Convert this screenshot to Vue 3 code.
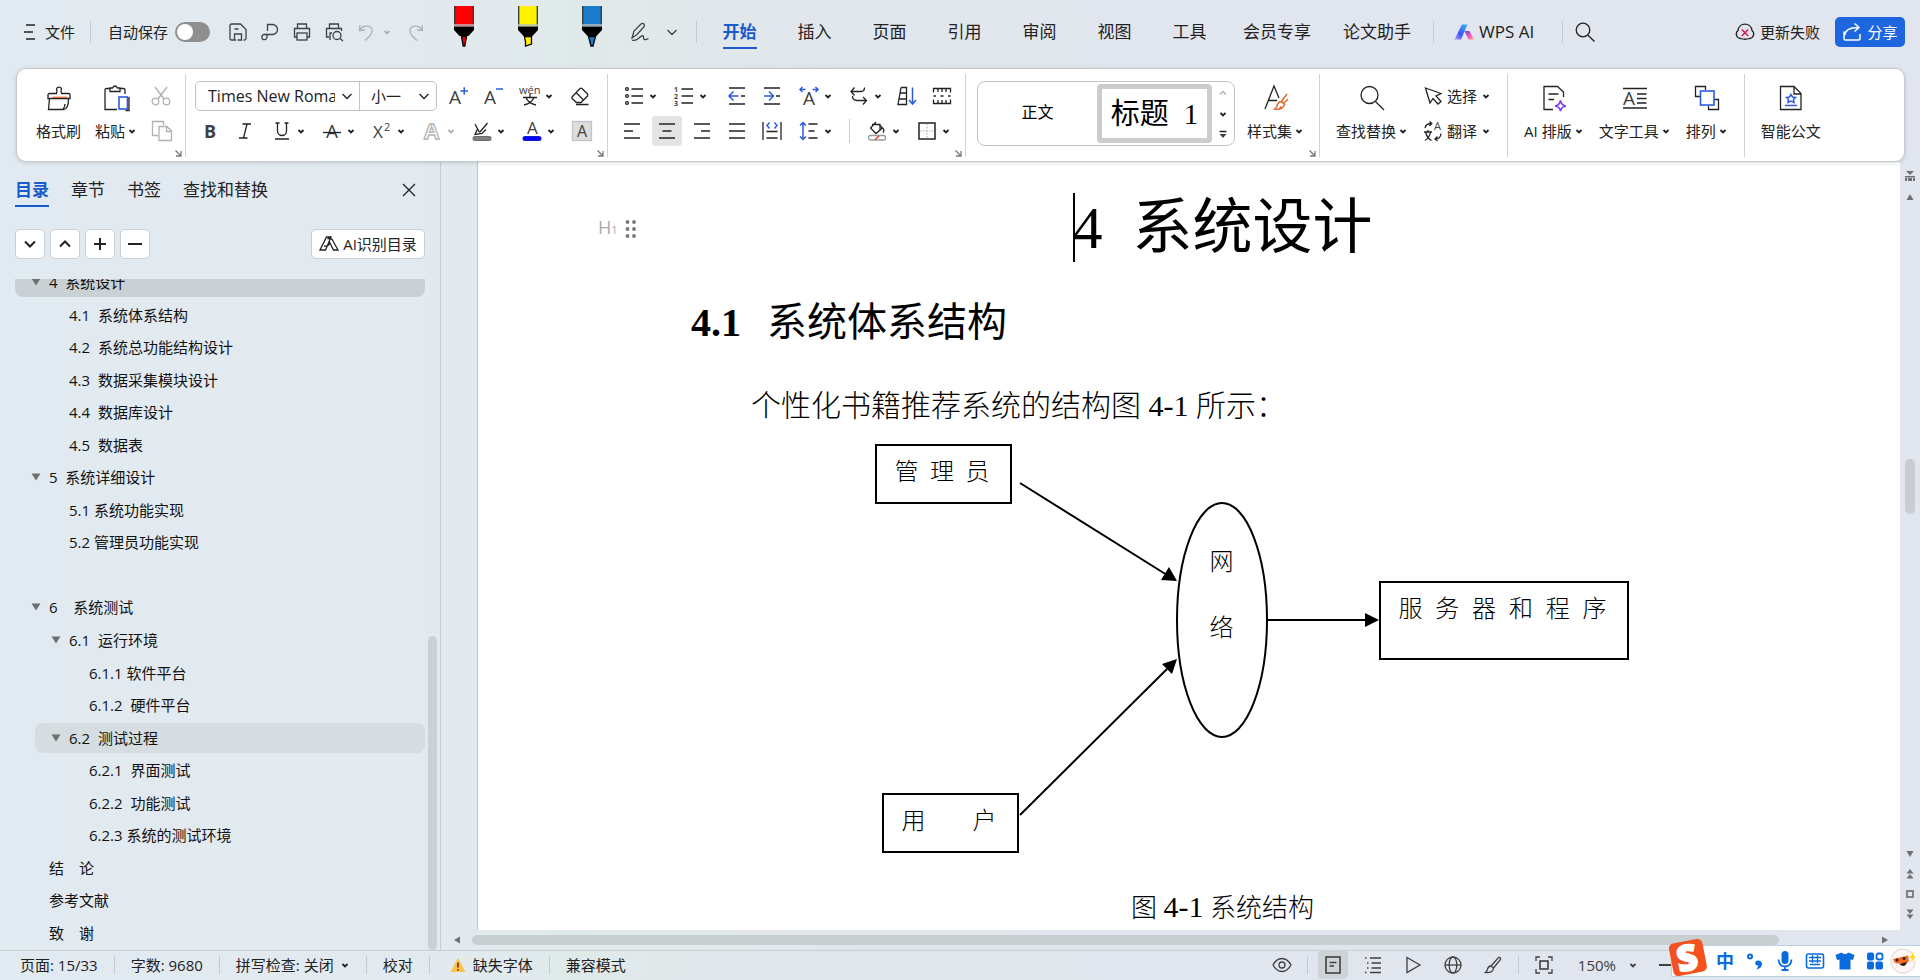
<template>
  <div class="wps">
    <header class="topbar">
      <button class="file_btn"><Icon n="menu" :s="12" :h="16" /> 文件</button>
      <i class="sep"></i>
      <label class="autosave">自动保存<input type="checkbox" class="toggle"></label>
      <button v-for="q in quick" :key="q" class="quick_btn" :class="{ faded: q == 'undo' }" :aria-label="q"><Icon :n="q" /></button>
      <button class="mini faded" aria-label="undo list"><Icon n="chev" :s="10" /></button>
      <button class="quick_btn faded redo" aria-label="redo"><Icon n="redo" /></button>
      <button v-for="p in pens" :key="p" class="pen_btn" :aria-label="p"><Icon :n="p" :s="20" :h="42" /></button>
      <button class="quick_btn" aria-label="ink"><Icon n="scribble" /></button>
      <button class="quick_btn" aria-label="ink list"><Icon n="chevBig" :s="12" /></button>
      <i class="sep tabs_sep"></i>
      <nav class="tabs">
        <button v-for="(t, i) in tabs" :key="t" :class="{ active: i == 0 }"><span>{{ t }}</span></button>
      </nav>
      <i class="sep ai_sep"></i>
      <button class="ai_btn"><Icon n="wpsai" />WPS AI</button>
      <i class="sep search_sep"></i>
      <button class="search_btn" aria-label="search"><Icon n="search" :s="22" /></button>
      <button class="update_btn"><Icon n="updateFail" />更新失败</button>
      <button class="share_btn"><Icon n="share" />分享</button>
    </header>

    <section class="ribbon">
      <div class="group clip">
        <BigBtn n="brush" label="格式刷" />
        <BigBtn n="paste" label="粘贴" more />
        <div class="rows faded">
          <button class="row" aria-label="cut"><Icon n="cut" /></button>
          <button class="row" aria-label="copy"><Icon n="copy" :s="22" /></button>
        </div>
        <button class="launcher" aria-label="clipboard options"><Icon n="launcher" :s="7" /></button>
      </div>

      <div class="group font">
        <div class="rows">
          <div class="row">
            <div class="combo">
              <div class="pick family">
                <select aria-label="font"><option>Times New Roman</option></select>
                <Icon n="chevBig" :s="12" />
              </div>
              <div class="pick size">
                <select aria-label="size"><option>小一</option></select>
                <Icon n="chevBig" :s="12" />
              </div>
            </div>
            <ToolBtn v-for="t in fontTop" :key="t.n" v-bind="t" />
          </div>
          <div class="row">
            <ToolBtn v-for="t in fontBottom" :key="t.n" v-bind="t" />
          </div>
        </div>
        <button class="launcher" aria-label="font options"><Icon n="launcher" :s="7" /></button>
      </div>

      <div class="group para">
        <div class="rows">
          <div class="row">
            <ToolBtn v-for="t in paraTop" :key="t.n" v-bind="t" />
          </div>
          <div class="row">
            <ToolBtn v-for="t in paraBottom" :key="t.n" v-bind="t" />
          </div>
        </div>
        <button class="launcher" aria-label="paragraph options"><Icon n="launcher" :s="7" /></button>
      </div>

      <div class="group styles">
        <div class="gallery">
          <button class="style_body">正文</button>
          <button class="style_title">标题<span>1</span></button>
          <div class="gallery_nav">
            <button class="faded" aria-label="up"><Icon n="up" :s="10" /></button>
            <button aria-label="down"><Icon n="chev" :s="10" /></button>
            <button aria-label="more"><Icon n="moreDown" :s="10" /></button>
          </div>
        </div>
        <BigBtn n="styleSet" label="样式集" more />
        <button class="launcher" aria-label="style options"><Icon n="launcher" :s="7" /></button>
      </div>

      <div class="group">
        <BigBtn n="find" label="查找替换" more />
        <div class="rows side">
          <button class="row"><Icon n="cursor" />选择<Icon n="chev" :s="10" /></button>
          <button class="row"><Icon n="translate" />翻译<Icon n="chev" :s="10" /></button>
        </div>
      </div>

      <div class="group">
        <BigBtn n="aiLayout" label="AI 排版" more />
        <BigBtn n="textTool" label="文字工具" more />
        <BigBtn n="arrange" label="排列" more />
      </div>

      <div class="group last">
        <BigBtn n="official" label="智能公文" />
      </div>
    </section>

    <main class="body">
      <aside class="outline">
        <div class="outline_tabs">
          <button v-for="(t, i) in sideTabs" :key="t" :class="{ active: i == 0 }">{{ t }}</button>
          <button class="close" aria-label="close"><Icon n="close" :s="14" /></button>
        </div>
        <div class="outline_tools">
          <button v-for="o in ['tDown', 'tUp', 'tPlus', 'tMinus']" :key="o" class="sq" :aria-label="o"><Icon :n="o" :s="16" /></button>
          <button class="ai_toc"><Icon n="aiToc" />AI识别目录</button>
        </div>
        <div class="tree_view">
          <ul class="tree">
            <li v-for="(r, i) in tree" :key="i" :class="['lv' + r.lv, r.state]">
              <span class="arrow"><Icon v-if="r.open" n="tri" :s="10" /></span>{{ r.text }}
            </li>
          </ul>
          <div class="tree_thumb"></div>
        </div>
      </aside>

      <section class="workspace">
        <div class="page_row">
          <article class="page">
            <div class="para_mark"><span>H<small>1</small></span><Icon n="dots" :s="12" :h="20" /></div>
            <h1><span class="caret"></span>4<span class="title_text">系统设计</span></h1>
            <h2><b>4.1</b>系统体系结构</h2>
            <p>个性化书籍推荐系统的结构图 4-1 所示：</p>
            <figure>
              <div class="canvas">
                <svg class="links" width="812" height="410" viewBox="0 0 812 410">
                  <g fill="none" stroke="#000" stroke-width="2">
                    <ellipse cx="405" cy="176" rx="45" ry="117" />
                    <path d="M203 39L350 131M203 371L350 225M450 176H550" />
                  </g>
                  <path d="M360 137L344 136L352 123ZM360 215L355 230L345 220ZM562 176L548 169V183Z" />
                </svg>
                <div class="node admin">管 理 员</div>
                <div class="node user">用 户</div>
                <div class="node server">服 务 器 和 程 序</div>
                <div class="net"><span>网</span><span>络</span></div>
              </div>
              <figcaption>图 <span>4-1</span> 系统结构</figcaption>
            </figure>
          </article>
          <div class="vbar">
            <Icon n="split" :s="12" />
            <Icon n="sUp" :s="10" />
            <div class="v_track"><div class="v_thumb"></div></div>
            <Icon n="sDown" :s="10" />
            <Icon n="sUp2" :s="10" />
            <Icon n="sBox" :s="10" />
            <Icon n="sDown2" :s="10" />
          </div>
        </div>
        <div class="hbar">
          <Icon n="sLeft" :s="10" />
          <div class="h_track"><div class="h_thumb"></div></div>
          <Icon n="sRight" :s="10" />
        </div>
      </section>
    </main>

    <footer class="status">
      <span>页面: 15/33</span><i></i>
      <span>字数: 9680</span><i></i>
      <button>拼写检查: 关闭<Icon n="chev" :s="10" class="after" /></button><i></i>
      <button>校对</button><i></i>
      <button class="warn"><Icon n="warn" :s="16" />缺失字体</button><i></i>
      <span>兼容模式</span>
      <div class="status_right">
        <button aria-label="eye"><Icon n="eye" /></button><i></i>
        <button v-for="v in views" :key="v" :class="{ on: v == 'vPage' }" :aria-label="v"><Icon :n="v" /></button><i></i>
        <button aria-label="fit"><Icon n="fit" /></button>
        <button class="zoom">150%<Icon n="chev" :s="10" /></button>
        <button class="zoom_out" aria-label="zoom out"><Icon n="minus" :s="14" /></button>
      </div>
    </footer>

    <div class="ime">
      <Icon n="sogou" :s="42" :h="40" class="ime_logo" />
      <button>中</button>
      <button v-for="m in ['punct', 'mic', 'kbd', 'shirt', 'apps']" :key="m" :aria-label="m"><Icon :n="m" /></button>
      <Icon n="mascot" :s="26" />
    </div>
  </div>
</template>

<script setup>
import { h } from 'vue'

const B = '#2b5ce0'

const icons = {
  menu: '<path d="M2 1H11M0 8H9M2 15H11" stroke-width="1.500"/>',
  chev: '<path d="M2.500 4L5 6.500L7.500 4" stroke-width="1.800"/>',
  chevBig: '<path d="M1.500 4L6 8.500L10.500 4"/>',
  up: '<path d="M2 6.500L5 3.500L8 6.500"/>',
  moreDown: '<path d="M1.500 1.500H8.500" stroke-width="1.500"/><path d="M1.500 4H8.500L5 8Z" fill="#404040" stroke="none"/>',
  launcher: '<path d="M.5.500L5.500 5.500M6 1V6H1" stroke="#777"/>',
  save: '<path d="M8 18H3.500Q2 18 2 16.500V3.500Q2 2 3.500 2H12.500L18 7.500V16.500Q18 18 16.500 18H15.500"/><path d="M6.500 18V12H13.500V18H9.500M6.500 7H10.500"/>',
  wpspdf: '<path d="M7.500 9V2.500H12.500A5 5 0 0 1 12.500 12.500H7V15A2.600 2.600 0 1 1 4.500 12.500H7"/>',
  print: '<path d="M5.500 6V2H14.500V6M5 15H2.500V6.500H17.500V15H15"/><rect x="5" y="11" width="10" height="7"/>',
  preview: '<path d="M5.500 6V2H14.500V6M5 15H2.500V6.500H17.500V9M6 18V11H8"/><circle cx="13" cy="13.500" r="4"/><path d="M16 16.500L19 19"/>',
  undo: '<path d="M4 3L3.500 8.500L9 8M3.700 8.300C8 1.500 16 4 16 9C16 13 11 16.500 9 18.500"/>',
  redo: '<path d="M16 3L16.500 8.500L11 8M16.300 8.300C12 1.500 4 4 4 9C4 13 9 16.500 11 18.500"/>',
  penRed: pen('#f00', 'M7.500 31.500H12.500L10.800 41H9.200Z'),
  penYellow: pen('#fff200', 'M6.500 31.500H13.500V39L7.500 41V37Z'),
  penBlue: pen('#1c7ccc', 'M6.500 31.500H13.500L11 41H9Z'),
  scribble: '<path d="M2 16L4 9L11.500 1.500Q13 1 14 2.200Q15 3.500 14 4.700L7 12.500L2 16ZM2 18Q5 19.500 9 16Q12.500 12.500 13.500 14.500C13 18 15 18.500 18.500 16.500"/>',
  wpsai: '<defs><linearGradient id="wa" x1="0" y1="1" x2="1" y2="0"><stop offset="0" stop-color="#b8a0ff"/><stop offset=".4" stop-color="#3a56f5"/><stop offset="1" stop-color="#35b8ff"/></linearGradient><linearGradient id="wb" x1="0" y1="0" x2="1" y2="1"><stop offset="0" stop-color="#5b3cf5"/><stop offset=".6" stop-color="#ff5bb0"/><stop offset="1" stop-color="#ffb09a"/></linearGradient></defs><path d="M8 2.500H13.500L7 17.500H.500Z" fill="url(#wa)" stroke="none"/><path d="M10.500 9H15.500L20 17.500H14.500Z" fill="url(#wb)" stroke="none"/>',
  search: '<circle cx="9" cy="9" r="6.800"/><path d="M14 14.200L20.500 20.500"/>',
  updateFail: '<path d="M5.500 16.500A4.500 4.500 0 0 1 3 8.500C4 0 16 0 17 8.500A4.500 4.500 0 0 1 14.500 16.500Q10 18 5.500 16.500Z"/><path d="M6.800 7.500L13.200 14M13.200 7.500L6.800 14" stroke="#d02050" stroke-width="1.600"/>',
  share: '<path d="M2 9.500V16.500Q2 18 3.500 18H16.500Q18 18 18 16.500V12M2.500 13.500C3 8 7 5.500 16.500 5.500M12.500 1.500L17 5.500L12.500 9.500" stroke-width="1.500"/>',
  brush: '<path d="M10.500 8.500Q11.500 6 10.500 4A2.600 2.600 0 0 1 15.500 4Q14.500 6 15.500 8.500H22.500Q24 8.500 24 10V13.500H2V10Q2 8.500 3.500 8.500ZM3.500 13.500L2.500 24.500H17.500Q22.500 24.500 22.500 13.500"/><path d="M6.500 12.300H21" stroke="#e06a30"/><path d="M17 24Q19 22 19 19"/>',
  paste: '<path d="M7 3.500H3.500Q2 3.500 2 5V24.500H14M17 3.500H20.500Q22 3.500 22 5V9M7 6.500V3H9.500Q12 -1 14.500 3H17V6.500Z"/><rect x="16" y="12" width="8.500" height="12" stroke="#2b5ce0" stroke-width="1.600"/><path d="M22.500 25.500H26V12"/>',
  cut: '<path d="M4 1L13 13M16 1L7 13"/><circle cx="4.500" cy="15.500" r="3.300"/><circle cx="15.500" cy="15.500" r="3.300"/>',
  copy: '<path d="M7 15.500H1.500V1.500H12.500V5M8 6.500H16L20.500 11V20.500H8ZM15.500 7V11.500H20"/>',
  aUp: txt(1, 18, 19, 'A') + `<path d="M12.500 5H20M16.200 1.200V8.800" stroke="${B}" stroke-width="1.500"/>`,
  aDown: txt(1, 18, 19, 'A') + `<path d="M13 3H20" stroke="${B}" stroke-width="1.500"/>`,
  wen: txt(-1, 8, 11, 'wén') + '<path d="M10 8V11M3 11.500H17M6 11.500Q8 17 16 19M14 11.500Q12 17 4 19"/>',
  eraser: '<path d="M2 11L10 2.500Q11 1.800 12 2.500L17.500 8Q18 9 17.500 10L11 16.500H6.500L2 12.500ZM6.500 7L13 13.500M6 18.500H18.500"/>',
  bold: txt(4, 17, 18, 'B', 'font-weight="700"'),
  italic: '<path d="M7.500 3H16M4 17H12.500M12 3L8.500 17"/>',
  underline: '<path d="M5.500 2V10A4.500 4.500 0 0 0 14.500 10V2M3.500 2H7.500M12.500 2H16.500M3 18H17"/>',
  strike: txt(4, 17, 19, 'A') + '<path d="M1 11.500H19"/>',
  sup: txt(1, 17, 17, 'X') + txt(12, 10, 11, '2'),
  outlineA: '<text x="2" y="18" font-size="22" font-weight="700" fill="#fff" stroke="#b4b4b4">A</text>',
  hilite: '<path d="M8 11L15.500 2M3 3L7.500 11.500M14 8.500L10 12.500L3 13.500L5.500 8"/><rect x="1" y="15.500" width="18" height="4" rx="1.500" fill="#808080" stroke="#555" stroke-width=".8"/>',
  fontColor: txt(5, 13, 17, 'A') + '<rect x="1" y="15.500" width="18" height="4" rx="1.500" fill="#00f" stroke="#00c" stroke-width=".8"/>',
  shadeA: '<rect x=".5" y=".5" width="19" height="19" fill="#dcdcdc" stroke="#c4c4c4"/>' + txt(5, 16, 16, 'A'),
  bullets: '<circle cx="3" cy="3" r="1.400"/><circle cx="3" cy="10" r="1.400"/><circle cx="3" cy="17" r="1.400"/><path d="M7.500 3H19M7.500 10H19M7.500 17H19"/>',
  numbers: txt(0, 6, 7, '1', 'font-weight="700"') + txt(0, 13, 7, '2', 'font-weight="700"') + txt(0, 20, 7, '3', 'font-weight="700"') + '<path d="M7.500 3H19M7.500 10H19M7.500 17H19"/>',
  outdent: `<path d="M2 2H18M2 18H18M14 10H18"/><path d="M11.500 10H2.500M6.500 5.500L2 10L6.500 14.500" stroke="${B}" stroke-width="1.500"/>`,
  indent: `<path d="M2 2H18M2 18H18M14 10H18"/><path d="M2 10H11M7 5.500L11.500 10L7 14.500" stroke="${B}" stroke-width="1.500"/>`,
  charW: `<path d="M1 3.500H6.500M3.500 1L1 3.500L3.500 6M19 3.500H13.500M16.500 1L19 3.500L16.500 6" stroke="${B}" stroke-width="1.500"/>` + txt(4, 19, 19, 'A'),
  swap: '<path d="M5.500 1.500L2 5.500L5.500 9.500M2.500 5.500H12Q15.500 5.500 15.500 1.500M14 11L17.500 14.500L14 18.500M17 14.500H8Q3.500 14.500 3.500 10"/>',
  sort: `<path d="M4 1.500H9.500V18.500H1L4 1.500M3 7H9M2 13H9"/><path d="M15.500 1.500V17.500M12 14L15.500 18L19 14" stroke="${B}" stroke-width="1.500"/>`,
  cells: '<path d="M1.500 6.500V2.500H18.500V6.500M1.500 13.500V17.500H18.500V13.500M6 3V6M10 3V6M14 3V6M6 17V14M10 17V14M14 17V14"/><path d="M1.500 10H4M8.500 10H11.500M16 10H18.500"/>',
  alignL: '<path d="M2 3H18M2 10H11M2 17H18"/>',
  alignC: '<path d="M2 3H18M5.500 10H14.500M2 17H18"/>',
  alignR: '<path d="M2 3H18M9 10H18M2 17H18"/>',
  justify: '<path d="M2 3H18M2 10H18M2 17H18"/>',
  distribute: `<path d="M1 1V19M19 1V19M4.500 10.500H15.500M4.500 17H15.500"/><path d="M7.500 1.500L5 4.500L7.500 7.500M12.500 1.500L15 4.500L12.500 7.500" stroke="${B}" stroke-width="1.500"/>`,
  spacing: `<path d="M4 1.500V18.500M1 4.500L4 1.500L7 4.500M1 15.500L4 18.500L7 15.500" stroke="${B}" stroke-width="1.500"/><path d="M9.500 3H18.500M9.500 10H15.500M9.500 17H18.500"/>`,
  fill: '<path d="M5 3.500H13V9M9 1L3.500 7L9 12.500L15.500 7L12 3.500M15.500 7Q18 9 16 11.500"/><rect x="1.500" y="14.500" width="17" height="4.500" rx="2" stroke="#999"/><path d="M8 18.500L12 15" stroke="#e03030"/>',
  border: '<rect x="2" y="2" width="16" height="16" stroke-width="1.500"/><path d="M10 3V17M3 10H17" stroke-dasharray="1.500 1.500" stroke="#aaa" stroke-width="1"/>',
  styleSet: '<path d="M2 24L11 1L16 13M5.500 15.500H14"/><path d="M24 9L18 17M25 14L20 19M18.500 16.500L21.500 19.500Q19 25.500 11.500 24Q14.500 22 14.500 19.500Q16 16.500 18.500 16.500ZM16.500 24L18 21.500" stroke="#e0662c" stroke-width="1.500"/>',
  find: '<circle cx="10.500" cy="10" r="8.500"/><path d="M16.500 16.500L25 25"/>',
  cursor: '<path d="M2.500 2L18 7.500L13 10L18 15.500L15 18L10 12.500L7 17Z"/>',
  translate: '<path d="M2 7Q3 2.500 8.500 2.500M6.500.500L8.800 2.500L6.500 5M18 12.500Q17.500 18 12.500 18M14.500 15.500L12 18L14.500 20M1 11H9M5 9V11M2 19.500Q6.500 17 7.500 11M8.500 19.500Q4 17 2.500 11"/>' + txt(11, 9, 11, 'A'),
  aiLayout: '<path d="M12 24.500H3V1.500H16.500L22.500 7V12M7.500 9H17.500M7.500 14.500H13"/><path d="M19.500 15.500Q20.500 20.500 25 21Q20.500 21.500 19.500 26Q18.500 21.500 14 21Q18.500 20.500 19.500 15.500Z" stroke="#7a3df0" stroke-width="1.600"/>',
  textTool: '<path d="M1 3.500H25M1 23H25M15 9H24.500M15 13.500H24.500M15 18H24.500"/>' + txt(1, 20, 19, 'A'),
  arrange: `<path d="M6 11.500H1.500V1.500H11.500V5M20 14.500H24.500V24.500H14.500V21"/><rect x="6.500" y="6" width="13.500" height="14" stroke="${B}" stroke-width="1.600"/>`,
  official: `<path d="M2.500 1.500H16L23 8.500V24.500H2.500ZM16 2V9H22.500"/><path d="M13 9.500L14.500 12L17.500 12.500L15.500 14.500L16 17.500L13 16L10 17.500L10.500 14.500L8.500 12.500L11.500 12ZM7 20.500H19" stroke="${B}" stroke-width="1.500"/>`,
  close: '<path d="M1 1L13 13M13 1L1 13"/>',
  tDown: '<path d="M3 5.500L8 10.500L13 5.500" stroke-width="2"/>',
  tUp: '<path d="M3 10.500L8 5.500L13 10.500" stroke-width="2"/>',
  tPlus: '<path d="M2 8H14M8 2V14" stroke-width="2"/>',
  tMinus: '<path d="M1 8H15" stroke-width="2"/>',
  aiToc: '<path d="M1 16L7.500 3H12L6.500 16ZM10 7L14.500 16H19L13.500 6Q11 3 8.500 5M5 12Q9 13 11 9"/>',
  tri: '<path d="M.5 1.500H9.500L5 8.500Z" fill="#707070" stroke="none"/>',
  dots: '<g fill="#777" stroke="none"><circle cx="2.500" cy="3" r="1.900"/><circle cx="9" cy="3" r="1.900"/><circle cx="2.500" cy="10" r="1.900"/><circle cx="9" cy="10" r="1.900"/><circle cx="2.500" cy="17" r="1.900"/><circle cx="9" cy="17" r="1.900"/></g>',
  split: solid('M2 1H10L6 5ZM1 6H11V7.500H1ZM1 8H3V11H1ZM4 8H8V11H4ZM9 8H11V11H9Z'),
  sUp: solid('M5 2L8.500 8H1.500Z'),
  sDown: solid('M5 8L8.500 2H1.500Z'),
  sUp2: solid('M5 0L8.500 4.500H1.500ZM5 5L8.500 9.500H1.500Z'),
  sDown2: solid('M5 5L8.500 .5H1.500ZM5 10L8.500 5.500H1.500Z'),
  sBox: '<rect x="2" y="2" width="6" height="6" stroke="#777" stroke-width="1.800"/>',
  sLeft: solid('M2 5L8 1.500V8.500Z'),
  sRight: solid('M8 5L2 1.500V8.500Z'),
  warn: '<path d="M8 1L15.500 15H.500Z" fill="#fbc04e" stroke="none"/><path d="M8 5.500V10.500M8 12V13.500" stroke="#7a4a00" stroke-width="1.800"/>',
  eye: '<path d="M1 10Q4.500 3.500 10 3.500T19 10Q15.500 16.500 10 16.500T1 10Z"/><circle cx="10" cy="10" r="3"/>',
  vPage: '<rect x="3" y="2" width="14" height="16" stroke-width="1.600"/><path d="M6.500 7.500H13.500M6.500 11H11"/>',
  vOutline: '<path d="M2 3H3.500M7 3H18M4 8H5.500M8.500 8H18M4 13H5.500M8.500 13H18M2 17.500H3.500M7 17.500H18"/>',
  vPlay: '<path d="M4 2.500L17 10L4 17.500Z"/>',
  vWeb: '<circle cx="10" cy="10" r="8"/><ellipse cx="10" cy="10" rx="3.800" ry="8"/><path d="M2 10H18"/>',
  vPen: '<path d="M8 11L15.500 2.500Q18 2 17.500 4.500L10.500 13M8 11L10.500 13Q10.500 18 2.500 17.500Q4.500 16 4.500 14Q5.500 11 8 11Z"/>',
  fit: '<path d="M6 2H2V6M14 2H18V6M6 18H2V14M14 18H18V14"/><rect x="6" y="6" width="8" height="8" stroke-width="1.600"/>',
  minus: '<path d="M0 7H14" stroke-width="2"/>',
  sogou: '<g transform="rotate(-11 21 20)"><rect x="4" y="3" width="34" height="33" rx="5" fill="#f4511e" stroke="none"/><text x="10" y="32" font-size="35" font-weight="800" fill="#fff" stroke="#fff" stroke-width="2">S</text></g>',
  punct: '<circle cx="5" cy="5.500" r="2" stroke="#0a6cdc" stroke-width="2"/><path d="M13.500 9.500A2.600 2.600 0 1 0 13.500 14.500L11.500 18.500Q17.500 17 17 12Q16 9.500 13.500 9.500Z" fill="#0a6cdc" stroke="none"/>',
  mic: '<rect x="6.500" y="0" width="7" height="13" rx="3.500" fill="#0a6cdc" stroke="none"/><path d="M3.500 8.500Q4 15.500 10 15.500T16.500 8.500M10 15.500V19M6.500 19H13.500" stroke="#0a6cdc" stroke-width="1.800"/>',
  kbd: '<rect x="1.500" y="3" width="17" height="14" rx="2" stroke="#0a6cdc" stroke-width="1.600"/><path d="M4 6.500H16M4 10H16M5 13.500H15M7.500 4V12M12.500 4V12" stroke="#0a6cdc"/>',
  shirt: '<path d="M6.500 1.500Q10 4.500 13.500 1.500L19.500 4L18 9L15.500 8.500V18.500H4.500V8.500L2 9L.500 4Z" fill="#0a6cdc" stroke="none"/>',
  apps: '<g fill="#0a6cdc" stroke="none"><rect x="2" y="1.500" width="7" height="8" rx="2"/><rect x="2" y="10.500" width="7" height="8" rx="2"/><rect x="10.500" y="10.500" width="7.500" height="8" rx="2"/></g><rect x="11.500" y="2.500" width="6" height="6" rx="2" stroke="#0a6cdc" stroke-width="1.800"/>',
  mascot: '<ellipse cx="13" cy="13" rx="12" ry="12" fill="#fdf6f4" stroke="#eadedb"/><path d="M3 11Q11 9 18 7.500L19 13Q16 17 11 15Q4 17 3 11Z" fill="#f36b21" stroke="none"/><circle cx="7" cy="12" r="1.500" fill="#222" stroke="none"/><path d="M9 16Q15 21 17 14Z" fill="#3b1a10" stroke="none"/><circle cx="14" cy="10.500" r="1.500" fill="#222" stroke="none"/><path d="M22.500 4L23.500 7.800L26.500 9L23.500 10.200L22.500 14L21.500 10.200L18.500 9L21.500 7.800Z" fill="#ffd91a" stroke="none"/>',
}

function txt(x, y, size, t, extra = '') {
  return `<text x="${x}" y="${y}" font-size="${size}" fill="#404040" stroke="none" ${extra}>${t}</text>`
}
function solid(d) {
  return `<path d="${d}" fill="#707070" stroke="none"/>`
}
function pen(color, tip) {
  return `<rect x="1" y="1" width="18" height="20" fill="${color}" stroke="none"/><path d="M.700 1V21M19.300 1V21" stroke="#333"/><path d="M0 20H20" stroke="#bbb" stroke-width="1.500"/><path d="M0 21.500H20V25L14.500 31H5.500L0 25Z" fill="#000" stroke="none"/><path d="${tip}" fill="${color}" stroke="#000"/>`
}

const Icon = ({ n, s = 20, h: height }) => h('svg', {
  width: s,
  height: height || s,
  viewBox: `0 0 ${s} ${height || s}`,
  fill: 'none',
  stroke: 'currentColor',
  'stroke-width': 1.3,
  innerHTML: icons[n],
})

const BigBtn = ({ n, label, more }) => h('button', { class: 'big_btn' }, [
  h(Icon, { n, s: 26 }),
  h('span', [label, more ? h(Icon, { n: 'chev', s: 10 }) : null]),
])
BigBtn.props = { n: String, label: String, more: Boolean }

const ToolBtn = ({ n, more, on, cls }) => h('button', { class: ['tool_btn', { more, on }, cls], 'aria-label': n }, [
  h(Icon, { n }),
  more ? h(Icon, { n: 'chev', s: 10 }) : null,
])
ToolBtn.props = { n: String, more: Boolean, on: Boolean, cls: String }

const quick = ['save', 'wpspdf', 'print', 'preview', 'undo']
const pens = ['penRed', 'penYellow', 'penBlue']
const tabs = ['开始', '插入', '页面', '引用', '审阅', '视图', '工具', '会员专享', '论文助手']
const sideTabs = ['目录', '章节', '书签', '查找和替换']
const views = ['vPage', 'vOutline', 'vPlay', 'vWeb', 'vPen']

const fontTop = [{ n: 'aUp' }, { n: 'aDown' }, { n: 'wen', more: true }, { n: 'eraser', cls: 'wide' }]
const fontBottom = [
  { n: 'bold' },
  { n: 'italic' },
  { n: 'underline', more: true },
  { n: 'strike', more: true },
  { n: 'sup', more: true },
  { n: 'outlineA', more: true, cls: 'faded' },
  { n: 'hilite', more: true },
  { n: 'fontColor', more: true },
  { n: 'shadeA', cls: 'wide' },
]
const paraTop = [
  { n: 'bullets', more: true },
  { n: 'numbers', more: true },
  { n: 'outdent', cls: 'gap' },
  { n: 'indent' },
  { n: 'charW', more: true },
  { n: 'swap', more: true },
  { n: 'sort' },
  { n: 'cells' },
]
const paraBottom = [
  { n: 'alignL' },
  { n: 'alignC', on: true },
  { n: 'alignR' },
  { n: 'justify' },
  { n: 'distribute' },
  { n: 'spacing', more: true },
  { n: 'fill', more: true, cls: 'lined' },
  { n: 'border', more: true },
]

const tree = [
  { lv: 0, text: '4  系统设计', open: true, state: 'current' },
  { lv: 1, text: '4.1  系统体系结构' },
  { lv: 1, text: '4.2  系统总功能结构设计' },
  { lv: 1, text: '4.3  数据采集模块设计' },
  { lv: 1, text: '4.4  数据库设计' },
  { lv: 1, text: '4.5  数据表' },
  { lv: 0, text: '5  系统详细设计', open: true },
  { lv: 1, text: '5.1 系统功能实现' },
  { lv: 1, text: '5.2 管理员功能实现' },
  { lv: 0, text: '' },
  { lv: 0, text: '6    系统测试', open: true },
  { lv: 1, text: '6.1  运行环境', open: true },
  { lv: 2, text: '6.1.1 软件平台' },
  { lv: 2, text: '6.1.2  硬件平台' },
  { lv: 1, text: '6.2  测试过程', open: true, state: 'hover' },
  { lv: 2, text: '6.2.1  界面测试' },
  { lv: 2, text: '6.2.2  功能测试' },
  { lv: 2, text: '6.2.3 系统的测试环境' },
  { lv: 0, text: '结　论' },
  { lv: 0, text: '参考文献' },
  { lv: 0, text: '致　谢' },
]
</script>

<style>
body {
  margin: 0;
}
.wps button,
.wps select {
  border: 0;
  padding: 0;
  background: none;
  font: inherit;
  color: inherit;
  white-space: nowrap;
}
.wps svg {
  display: block;
  flex: none;
  overflow: visible;
}
.wps .big_btn {
  display: flex;
  flex-direction: column;
  align-items: center;
  gap: 10px;
  margin-top: 11px;
}
.big_btn span {
  display: flex;
  align-items: center;
  gap: 2px;
  line-height: 20px;
}
.tool_btn {
  display: flex;
  align-items: center;
  justify-content: center;
  width: 35px;
  height: 30px;
}
.tool_btn.wide {
  width: 40px;
}
.wps .tool_btn.more {
  width: 50px;
  gap: 4px;
  padding-left: 4px;
}
.tool_btn.gap {
  margin-left: 5px;
}
.tool_btn.on svg {
  background: #e4e4e4;
  box-shadow: 0 0 0 5px #e4e4e4;
  border-radius: 1px;
}
.tool_btn.lined {
  margin-left: 18px;
  position: relative;
}
.tool_btn.lined::before {
  content: "";
  position: absolute;
  left: -8px;
  top: 3px;
  height: 24px;
  border-left: 1px solid #ccc;
}
.faded {
  color: #b0b0b0 !important;
}
</style>

<style scoped>
.wps {
  display: flex;
  flex-direction: column;
  height: 100vh;
  overflow: hidden;
  position: relative;
  background: linear-gradient(90deg, #e2eaf1 0%, #e2eaf0 22%, #e0e9ea 30%, #e1e6ec 45%, #e1e5ee 65%, #e1e5ee 100%);
  color: #222;
  font: 15px/20px "Open Sans", "Noto Sans CJK SC", sans-serif;
}

/* top bar */
.topbar {
  display: flex;
  align-items: center;
  flex: none;
  height: 64px;
  padding: 0 15px 0 24px;
  box-sizing: border-box;
  margin-bottom: 4px;
}
.topbar button {
  display: flex;
  align-items: center;
  justify-content: center;
  flex: none;
}
.topbar .file_btn {
  gap: 9px;
}
.sep {
  flex: none;
  height: 22px;
  margin: 0 17px 0 15px;
  border-left: 1px solid #c5cad0;
}
.autosave {
  display: flex;
  align-items: center;
  gap: 7px;
  margin-right: 12px;
  white-space: nowrap;
}
.toggle {
  appearance: none;
  width: 35px;
  height: 20px;
  margin: 0;
  border-radius: 10px;
  background: #8f8f8f;
}
.toggle::before {
  content: "";
  display: block;
  width: 16px;
  height: 16px;
  margin: 2px;
  border-radius: 50%;
  background: #fff;
}
.wps .quick_btn {
  width: 32px;
  height: 32px;
  color: #404040;
}
.redo {
  margin-left: 8px;
}
.pen_btn {
  width: 64px;
  margin-top: -12px;
}
.tabs_sep {
  margin: 0 5px 0 8px;
}
.tabs {
  display: flex;
  font-size: 17px;
}
.wps .tabs button {
  min-width: 75px;
  padding: 0 16px;
}
.tabs span {
  padding: 7px 0 5px;
  border-bottom: 2px solid transparent;
  line-height: 20px;
}
.tabs .active {
  font-weight: 700;
  color: #1a5bcc;
}
.tabs .active span {
  border-bottom-color: #1a5bcc;
}
.ai_sep {
  margin: 0 20px 0 6px;
}
.ai_btn {
  gap: 5px;
}
.wps .ai_btn {
  font-size: 17px;
}
.search_sep {
  margin: 0 11px 0 28px;
}
.update_btn {
  gap: 5px;
  margin-left: auto;
}
.wps .share_btn {
  gap: 5px;
  width: 70px;
  height: 30px;
  margin-left: 15px;
  border-radius: 5px;
  background: #1e66e0;
  color: #fff;
}

/* ribbon */
.ribbon {
  display: flex;
  flex: none;
  height: 94px;
  margin: 0 15px 0 16px;
  box-sizing: border-box;
  border: 1px solid #c6cacf;
  border-radius: 10px;
  background: #fff;
  box-shadow: 0 1px 4px rgba(0, 0, 0, .15);
  position: relative;
  z-index: 1;
}
.group {
  display: flex;
  align-items: flex-start;
  gap: 15px;
  flex: none;
  height: 83px;
  margin-top: 5px;
  padding: 0 16px;
  border-right: 1px solid #d2d2d2;
  position: relative;
}
.group.last {
  border: 0;
}
.group.clip {
  gap: 14px;
  padding: 0 12px 0 19px;
}
.group.font {
  padding: 0 5px 0 6px;
}
.group.para {
  padding: 0 6px;
}
.group.styles {
  padding: 0 15px 0 11px;
  gap: 12px;
}
.rows {
  display: flex;
  flex-direction: column;
  gap: 5px;
  padding-top: 7px;
}
.row {
  display: flex;
  align-items: center;
  height: 30px;
}
.side .row {
  gap: 4px;
}
.launcher {
  position: absolute;
  right: 3px;
  bottom: 0;
}
.combo {
  display: flex;
  width: 240px;
  height: 28px;
  margin: 0 3px;
  border: 1px solid #c4c4c4;
  border-radius: 5px;
}
.pick {
  position: relative;
  display: flex;
}
.pick select {
  appearance: none;
  width: 100%;
  outline: 0;
}
.pick svg {
  position: absolute;
  right: 6px;
  top: 8px;
  pointer-events: none;
}
.family {
  width: 163px;
  border-right: 1px solid #c4c4c4;
  font-size: 16px;
}
.wps .family select {
  padding: 0 24px 0 12px;
}
.size {
  flex: 1;
}
.wps .size select {
  padding-left: 11px;
}
.gallery {
  display: flex;
  align-items: center;
  width: 258px;
  height: 65px;
  margin-top: 7px;
  box-sizing: border-box;
  border: 1px solid #c4c4c4;
  border-radius: 8px;
}
.wps .style_body {
  flex: 1;
  padding-bottom: 4px;
  font-size: 16px;
  color: #000;
}
.wps .style_title {
  width: 115px;
  height: 59px;
  border: 5px solid #ccc;
  border-radius: 4px;
  font: 29px/40px "Liberation Serif", "Noto Sans CJK SC", serif;
  color: #000;
}
.style_title span {
  margin-left: 15px;
}
.gallery_nav {
  display: flex;
  flex-direction: column;
  align-items: center;
  gap: 11px;
  width: 22px;
}

/* outline panel */
.body {
  display: flex;
  flex: 1;
  min-height: 0;
}
.outline {
  display: flex;
  flex-direction: column;
  width: 440px;
  flex: none;
  border-right: 1px solid #cdcdd0;
}
.outline_tabs {
  display: flex;
  align-items: flex-start;
  gap: 22px;
  height: 50px;
  padding: 12px 24px 0 15px;
  box-sizing: border-box;
  font-size: 17px;
}
.wps .outline_tabs button {
  padding: 4px 0 3px;
  line-height: 24px;
  border-bottom: 2px solid transparent;
}
.wps .outline_tabs .active {
  font-weight: 700;
  color: #1a5bcc;
  border-color: #1a5bcc;
}
.wps .outline_tabs .close {
  margin-left: auto;
  padding: 9px 0;
}
.outline_tools {
  display: flex;
  gap: 5px;
  padding: 17px 15px 20px;
}
.wps .outline_tools button {
  display: flex;
  align-items: center;
  justify-content: center;
  gap: 4px;
  height: 30px;
  box-sizing: border-box;
  border: 1px solid #c9ced2;
  border-radius: 5px;
  background: #fff;
}
.sq {
  width: 30px;
}
.ai_toc {
  width: 114px;
  margin-left: auto;
}
.tree_view {
  flex: 1;
  min-height: 0;
  overflow: hidden;
  position: relative;
}
.tree {
  display: flex;
  flex-direction: column;
  justify-content: space-between;
  height: calc(100% + 10px);
  box-sizing: border-box;
  margin: -12px 15px 0;
  padding: 0;
  list-style: none;
  color: #111;
}
.tree li {
  display: flex;
  align-items: center;
  height: 30px;
  border-radius: 8px;
  white-space: pre;
}
.arrow {
  width: 10px;
  margin: 0 8px 0 16px;
}
.lv1 {
  margin-left: 20px;
}
.lv2 {
  margin-left: 40px;
}
.current {
  background: #cad1d4;
}
.hover {
  background: #d5dde0;
}
.tree_thumb {
  position: absolute;
  right: 3px;
  bottom: 0;
  width: 9px;
  height: 314px;
  border-radius: 5px;
  background: #cad0d4;
}

/* document */
.workspace {
  display: flex;
  flex-direction: column;
  flex: 1;
  min-width: 0;
}
.page_row {
  display: flex;
  flex: 1;
  min-height: 0;
}
.page {
  flex: 1;
  margin-left: 36px;
  padding: 31px 146px 0 213px;
  overflow: hidden;
  position: relative;
  border-left: 1px solid #c0c6ca;
  background: #fff;
  color: #000;
  font-family: "Liberation Serif", "Noto Sans CJK SC", serif;
}
.para_mark {
  position: absolute;
  left: 120px;
  top: 55px;
  display: flex;
  align-items: center;
  gap: 7px;
  color: #aaa;
  font: 18px/20px "Open Sans", sans-serif;
}
.para_mark small {
  font-size: 11px;
}
.page h1 {
  margin: 0;
  font-size: 60px;
  line-height: 70px;
  font-weight: 400;
  text-align: center;
}
.caret {
  display: inline-block;
  width: 2px;
  height: 69px;
  margin-right: -2px;
  vertical-align: top;
  background: #000;
}
.title_text {
  margin-left: 30px;
}
.page h2 {
  margin: 30px 0 0;
  font-size: 40px;
  line-height: 60px;
  font-weight: 400;
}
.page h2 b {
  margin-right: 26px;
}
.page p {
  margin: 33px 0 0 60px;
  font-size: 30px;
  line-height: 40px;
  font-weight: 300;
}
figure {
  margin: 18px 0 0;
}
.canvas {
  position: relative;
  width: 812px;
  height: 410px;
  margin: 0 auto;
  font-size: 24px;
  line-height: 30px;
  font-weight: 300;
}
.links {
  position: absolute;
}
.node {
  position: absolute;
  box-sizing: border-box;
  padding: 11px 20px 11px 18px;
  border: 2px solid #000;
  text-align-last: justify;
}
.admin {
  left: 58px;
  top: 0;
  width: 137px;
  height: 60px;
}
.user {
  left: 65px;
  top: 349px;
  width: 137px;
  height: 60px;
}
.server {
  left: 562px;
  top: 137px;
  width: 250px;
  height: 79px;
}
.net {
  position: absolute;
  left: 393px;
  top: 103px;
  display: flex;
  flex-direction: column;
  gap: 36px;
}
figcaption {
  margin-top: 33px;
  font-size: 26px;
  line-height: 40px;
  font-weight: 300;
  text-align: center;
}
figcaption span {
  font-size: 30px;
}

/* scroll bars */
.vbar {
  display: flex;
  flex-direction: column;
  align-items: center;
  gap: 10px;
  width: 20px;
  padding: 8px 0 11px;
  box-sizing: border-box;
}
.v_track {
  flex: 1;
}
.v_thumb {
  width: 10px;
  height: 55px;
  margin-top: 247px;
  border-radius: 5px;
  background: #c9ccd1;
}
.hbar {
  display: flex;
  align-items: center;
  gap: 10px;
  height: 20px;
  flex: none;
  padding: 0 30px 0 11px;
}
.h_track {
  flex: 1;
}
.h_thumb {
  width: calc(100% - 91px);
  height: 10px;
  border-radius: 5px;
  background: #c9ced1;
}

/* status bar */
.status {
  display: flex;
  align-items: center;
  flex: none;
  height: 30px;
  box-sizing: border-box;
  padding: 0 0 2px 20px;
  border-top: 1px solid #c8cdd0;
  white-space: nowrap;
}
.status i {
  height: 18px;
  margin: 0 16px;
  border-left: 1px solid #c5cacf;
}
.status button {
  display: flex;
  align-items: center;
}
.after {
  margin: 0 0 0 6px;
}
.status .warn {
  gap: 7px;
  margin-left: 4px;
}
.status_right {
  display: flex;
  align-items: center;
  margin: 0 239px 0 auto;
  color: #404040;
}
.status_right button {
  justify-content: center;
  min-width: 30px;
  height: 29px;
}
.status_right button + button {
  margin-left: 10px;
}
.status_right i {
  margin: 0 10px;
}
.wps .status_right .on {
  border-radius: 5px;
  background: #cdd2d7;
}
.status_right button.zoom {
  gap: 12px;
  margin-left: 19px;
}
.status_right button.zoom_out {
  margin-left: 13px;
}

/* input method strip floating over the status bar */
.ime {
  position: absolute;
  right: 0;
  bottom: 3px;
  display: flex;
  align-items: center;
  height: 30px;
  padding: 0 4px 0 38px;
  border: 1px solid #bcd0e4;
  border-right: 0;
  background: #fff;
}
.ime_logo {
  position: absolute;
  left: -5px;
  bottom: -2px;
}
.wps .ime button {
  display: flex;
  justify-content: center;
  width: 30px;
  font-size: 18px;
  font-weight: 700;
  color: #0a6cdc;
}
</style>
